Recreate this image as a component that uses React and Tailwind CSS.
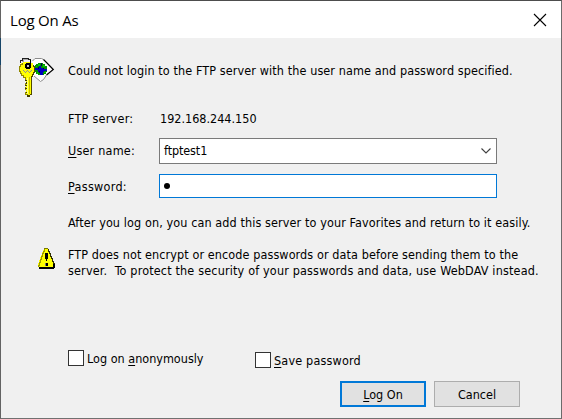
import React from "react";

const dialogFont = "font-['DejaVu_Sans_Condensed','DejaVu_Sans',sans-serif]";

function KeyIcon() {
  return (
    <svg width="36" height="42" viewBox="0 0 36 42" shapeRendering="crispEdges" className="block">
      <g shapeRendering="auto">
        <path d="M13.5 4.5L16 1.5H22.5L26.5 4.5L34 12.5L27 18.5L24.5 22.5L21.5 25L14 18.5Z" fill="#fff" />
        <path d="M13.5 4L16 1.5H22.5L24.5 2.5" fill="none" stroke="#8c8c8c" />
        <path d="M24.5 2.5L27.5 5.5L34.3 12.5L27.5 18" fill="none" stroke="#000" strokeWidth="1.2" />
        <path d="M27.5 18L24.5 22.5L21.5 24.5L15 19" fill="none" stroke="#8c8c8c" />
      </g>
      <path d="M19 6H24V7H26V9H28V15H27V17H25V18H19V17H17V15H16V8H17V7H19Z" fill="#009000" />
      <path d="M16 11H20V9H22V11H25V12H28V14H25V15H24V18H21V15H19V13H16Z" fill="#0000c0" />
      <path d="M19 7H21V9H19zM24 8H26V10H24zM18 15H19V17H18zM25 15H27V16H25zM17 9H18V10H17z" fill="#00c800" />
      <path d="M22 6H23V9H22zM19 10H20V12H19zM24 11H25V12H24zM20 14H21V16H20z" fill="#000050" />
      <path d="M4 5H12V6H14V8H15V10H16V15H15V17H14V19H13V37H11V39H8V37H6V20H4V18H2V16H1V14H0V9H1V7H2V6H4Z" fill="#ffff00" />
      <path d="M3.5 6V7H1.5V9H.5V14H1.5V16H2.5V18H4.5V20H6.5V37H8.5V39" fill="none" stroke="#908800" />
      <path d="M14.5 8V9H15.5V15H14.5V17H13.5V19H12.5V37H11.5V38" fill="none" stroke="#504a00" />
      <path d="M10.5 20V37" stroke="#c8bc00" />
      <path d="M8.5 21V37" stroke="#ffff80" />
      <path d="M5 24H7V26H5zM5 29H7V30H5zM5 33H7V35H5z" fill="#efefef" />
      <path d="M6 23H8V24H6zM7 25H8V27H7zM6 28H8V29H6zM6 31H8V32H6zM7 35H8V36H7zM8 38H11V40H8z" fill="#403c00" />
      <path d="M1.5 6V3.5H3.5V1.5H9.5V2.5H11.5V5" fill="none" stroke="#202020" />
      <path d="M3 4.5H4.5V2.5H9" fill="none" stroke="#aaa" />
      <path d="M7 6H11V7H12V11H11V12H7V11H6V7H7z" fill="#000" />
      <path d="M8 8H10V10H8z" fill="#c0c0c0" />
      <path d="M11 3H12V11H11z" fill="#000" />
      <path d="M4 13H5V14H6V15H7V14H8V13H9V14H10V15H11V14H12V13H13V14H12V15H11V16H10V15H9V14H8V15H7V16H6V15H5V14H4z" fill="#909090" />
    </svg>
  );
}

function WarningIcon() {
  return (
    <svg width="19" height="21" viewBox="0 0 19 21" shapeRendering="crispEdges" className="block">
      <path d="M7 1H11V3H12V5H13V8H14V10H15V13H16V15H17V19H1V15H2V12H3V9H4V7H5V4H6V2H7Z" fill="#ffff00" />
      <path d="M7 1V3H6V5H5V8H4V11H3V14H2V17H1V19" fill="none" stroke="#999900" />
      <path d="M11 1V3H12V5H13V8H14V10H15V13H16V15H17V18" fill="none" stroke="#303000" />
      <path d="M7 0H11V1H7z" fill="#777700" />
      <path d="M2 19H17V21H2zM16 16H18V20H16z" fill="#000" />
      <path d="M8 5H11V11H8zM9 11H10V13H9zM9 15H11V18H9z" fill="#000" />
      <path d="M8 15H9V18H8z" fill="#777" />
    </svg>
  );
}

const U = ({ children }) => <span className="underline underline-offset-2 decoration-1">{children}</span>;

export default function App() {
  return (
    <div className={`flex h-[419px] w-[562px] flex-col border border-t-[#4d4d4d] border-r-[#6b6b6b] border-b-[#707070] border-l-[#636363] bg-[#f0f0f0] text-[12.5px] leading-4 text-black whitespace-pre ${dialogFont}`}>
      <header className="flex h-[37px] shrink-0 items-center justify-between bg-white pr-[14px] pl-[9px]">
        <h1 className="font-['Open_Sans','Noto_Sans',sans-serif] text-[15px] leading-5 tracking-[-0.2px]">Log On As</h1>
        <svg width="14" height="14" viewBox="0 0 14 14"><path d="M1 1L13 13M13 1L1 13" stroke="#000" strokeWidth="1.1" /></svg>
      </header>
      <span className="-ml-px h-[27px] w-px shrink-0 bg-[#164568]" />
      <main className="-mt-[27px] flex flex-1 flex-col">
        <div className="flex h-[73px] shrink-0 pl-[18px]">
          <div className="w-[49px] pt-[19px]"><KeyIcon /></div>
          <p className="pt-[25px] tracking-[0.105px]">Could not login to the FTP server with the user name and password specified.</p>
        </div>
        <div className="flex h-[27px] shrink-0 pl-[67px]">
          <span className="w-[92px] tracking-[0.25px]">FTP server:</span><span>192.168.244.150</span>
        </div>
        <div className="flex h-[26px] shrink-0 items-center pl-[67px]">
          <label className="w-[91px] tracking-[0.2px]"><U>U</U>ser name:</label>
          <div className="flex h-[26px] w-[338px] items-center justify-between border border-[#7a7a7a] bg-white pr-[5px] pl-1">
            <span className="tracking-[-0.1px]">ftptest1</span>
            <svg width="10" height="6" viewBox="0 0 10 6"><path d="M.5 .5L5 5L9.5 .5" fill="none" stroke="#404040" strokeWidth="1.1" /></svg>
          </div>
        </div>
        <div className="mt-[10px] flex h-6 shrink-0 items-center pl-[67px]">
          <label className="w-[91px] pt-[2px] tracking-[0.3px]"><U>P</U>assword:</label>
          <div className="flex h-6 w-[338px] items-center border border-[#0078d7] bg-white pl-1">
            <span className="size-[6px] rounded-full bg-black" />
          </div>
        </div>
        <p className="mt-[17px] pl-[67px] tracking-[0.105px]">After you log on, you can add this server to your Favorites and return to it easily.</p>
        <div className="mt-4 flex h-[103px] shrink-0 pl-9">
          <div className="w-[31px] pt-px"><WarningIcon /></div>
          <div>
            <p className="tracking-[0.095px]">FTP does not encrypt or encode passwords or data before sending them to the</p>
            <p className="tracking-[0.165px]">{"server.  To protect the security of your passwords and data, use WebDAV instead."}</p>
          </div>
        </div>
        <div className="flex h-[31px] shrink-0 items-start pl-[67px]">
          <label className="flex h-4 w-[187px] items-center gap-[3px]">
            <span className="size-4 border border-[#333] bg-white" /><span className="pt-[2px]">Log on <U>a</U>nonymously</span>
          </label>
          <label className="mt-[2px] flex h-4 items-center gap-[3px]">
            <span className="size-4 border border-[#333] bg-white" /><span className="pt-[2px] tracking-[0.18px]"><U>S</U>ave password</span>
          </label>
        </div>
        <div className="flex gap-2 pl-[339px]">
          <button className="h-[26px] w-[86px] border-2 border-[#0078d7] bg-[#e1e1e1] pt-px"><U>L</U>og On</button>
          <button className="h-[26px] w-[86px] border border-[#adadad] bg-[#e1e1e1] pt-px">Cancel</button>
        </div>
      </main>
    </div>
  );
}
